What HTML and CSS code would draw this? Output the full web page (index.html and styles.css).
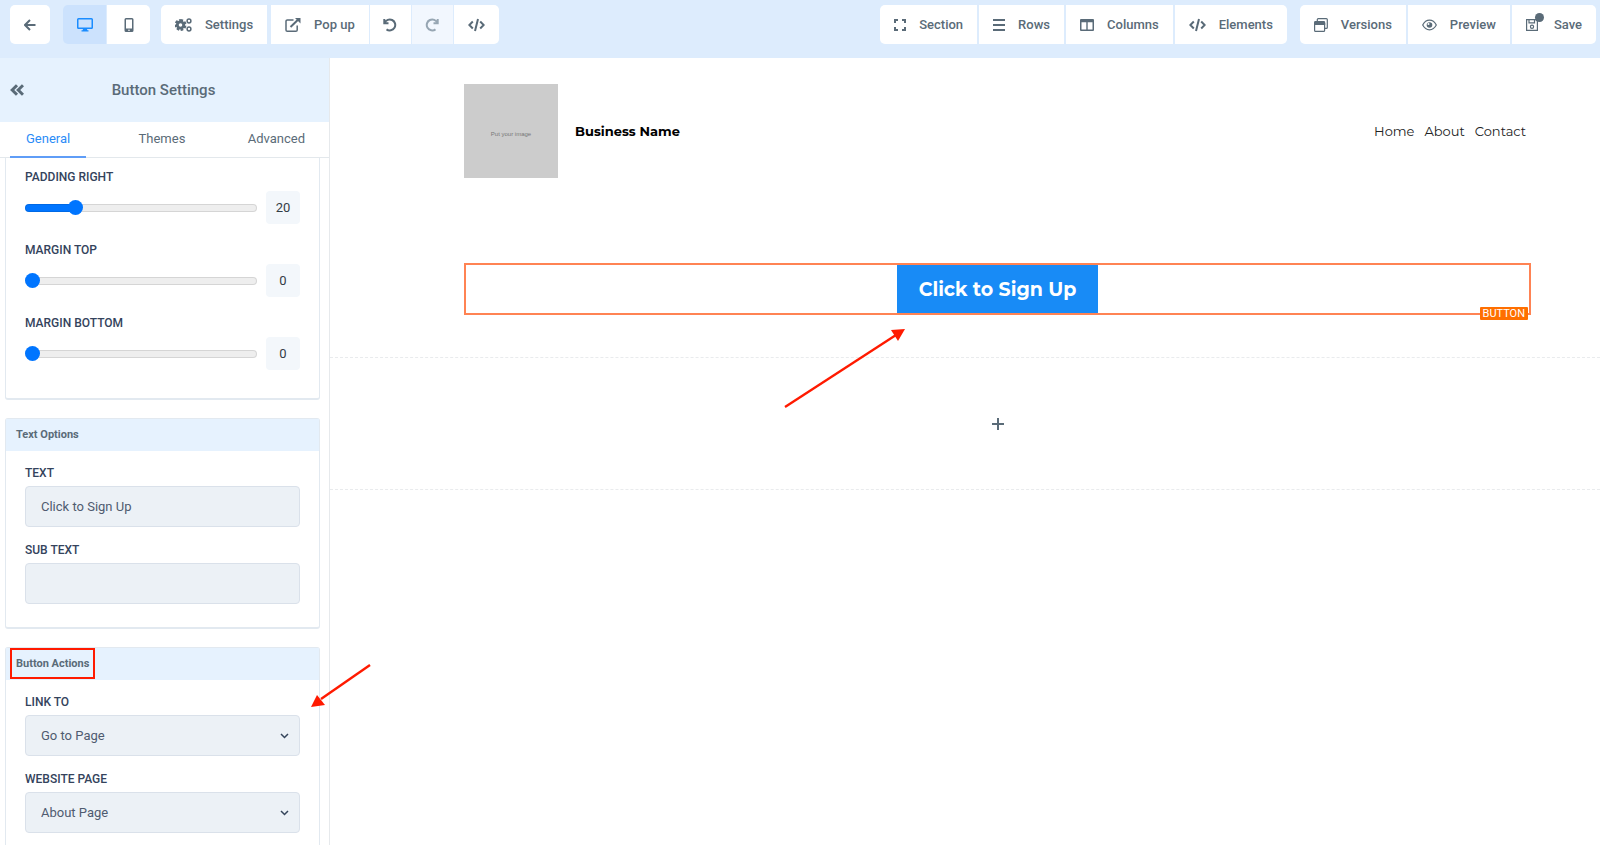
FILE: index.html
```html
<!DOCTYPE html>
<html lang="en">
<head>
  <meta charset="UTF-8">
  <meta name="viewport" content="width=device-width, initial-scale=1.0">
  <title>Page Builder</title>
  <link rel="stylesheet" href="styles.css">
</head>
<body>
  <header class="toolbar">
    <div class="group">
      <button class="tool back" aria-label="Back">
        <svg width="12" height="12" viewBox="0 0 12 12" class="line"><path d="M11.5 6H1.5M6 1L1 6l5 5"/></svg>
      </button>
    </div>
    <div class="group">
      <button class="tool device active" aria-label="Desktop">
        <svg width="16" height="14" viewBox="0 0 16 14"><path fill-rule="evenodd" d="M1.5 0h13A1.5 1.5 0 0 1 16 1.500v8a1.500 1.500 0 0 1-1.500 1.500H10l.4 1.300h1.100V13.500h-7V12.300h1.100L6 11H1.500A1.500 1.500 0 0 1 0 9.500v-8A1.500 1.500 0 0 1 1.500 0zm0 1.500v8h13v-8z"/></svg>
      </button>
      <button class="tool device" aria-label="Mobile">
        <svg width="10" height="14" viewBox="0 0 10 14"><path fill-rule="evenodd" d="M2 0h6a1.500 1.500 0 0 1 1.500 1.500v11A1.500 1.500 0 0 1 8 14H2a1.500 1.500 0 0 1-1.500-1.500v-11A1.500 1.500 0 0 1 2 0zm0 1.400v9h6v-9zm3 10a.8.8 0 1 0 0 1.600.8.800 0 0 0 0-1.600z"/></svg>
      </button>
    </div>
    <div class="group edit">
      <button class="tool settings">
        <svg width="17" height="14" viewBox="0 0 17 14">
          <circle cx="5.500" cy="7" r="3.200" fill="none" stroke="currentColor" stroke-width="2.800"/>
          <path fill="none" stroke="currentColor" stroke-width="2.400" stroke-dasharray="2.500 1.500" d="M5.500 2.200a4.800 4.800 0 1 1 0 9.600 4.800 4.800 0 0 1 0-9.600"/>
          <circle cx="14" cy="3" r="1.900" fill="none" stroke="currentColor" stroke-width="1.500"/>
          <circle cx="14" cy="11" r="1.900" fill="none" stroke="currentColor" stroke-width="1.500"/>
        </svg>
        Settings
      </button>
      <button class="tool">
        <svg width="16" height="14" viewBox="0 0 16 14"><path d="M8.500 2H2.300A1.300 1.300 0 0 0 1 3.300v8.600a1.300 1.300 0 0 0 1.300 1.300h8.600a1.300 1.300 0 0 0 1.300-1.300V7.500" fill="none" stroke="currentColor" stroke-width="1.500"/><path d="M5.500 9L13 1.800" stroke="currentColor" stroke-width="2"/><path d="M10 0h5.500v5.500z"/></svg>
        Pop up
      </button>
      <button class="tool small" aria-label="Undo">
        <svg width="14" height="14" viewBox="0 0 14 14" class="line"><path d="M1.300 1v4.200h4.200M1.600 5A5.500 5.500 0 1 1 3.500 11.400"/></svg>
      </button>
      <button class="tool small disabled" aria-label="Redo">
        <svg width="14" height="14" viewBox="0 0 14 14" class="line"><path d="M12.700 1v4.200H8.500M12.400 5A5.500 5.500 0 1 0 10.500 11.400"/></svg>
      </button>
      <button class="tool code" aria-label="Code">
        <svg width="17" height="14" viewBox="0 0 17 14" class="line"><path d="M4.800 3.500L1.300 7l3.500 3.500M12.200 3.500L15.700 7l-3.500 3.500M10 1L7 13"/></svg>
      </button>
    </div>
    <div class="group insert">
      <button class="tool">
        <svg width="12" height="12" viewBox="0 0 12 12" class="line"><path d="M1 4V1h3M8 1h3v3M11 8v3H8M4 11H1V8"/></svg>
        Section
      </button>
      <button class="tool">
        <svg width="12" height="12" viewBox="0 0 12 12" class="line"><path d="M0 1h12M0 6h12M0 11h12"/></svg>
        Rows
      </button>
      <button class="tool">
        <svg width="14" height="12" viewBox="0 0 14 12"><path fill-rule="evenodd" d="M1 0h12a1 1 0 0 1 1 1v10a1 1 0 0 1-1 1H1a1 1 0 0 1-1-1V1a1 1 0 0 1 1-1zm.5 3.200v7.400h4.800V3.200zm6.200 0v7.400h4.800V3.200z"/></svg>
        Columns
      </button>
      <button class="tool">
        <svg width="17" height="14" viewBox="0 0 17 14" class="line"><path d="M4.800 3.500L1.300 7l3.500 3.500M12.200 3.500L15.700 7l-3.500 3.500M10 1L7 13"/></svg>
        Elements
      </button>
    </div>
    <div class="group publish">
      <button class="tool">
        <svg width="14" height="14" viewBox="0 0 14 14"><path fill="none" stroke="currentColor" stroke-width="1.200" d="M3.300 3V1.600a1 1 0 0 1 1-1h8a1 1 0 0 1 1 1v7.800a1 1 0 0 1-1 1H11M.6 5v7.400a1 1 0 0 0 1 1h8a1 1 0 0 0 1-1V5"/><path d="M1.400 3h8.400A1.400 1.400 0 0 1 11.200 4.400V7H0V4.400A1.400 1.400 0 0 1 1.400 3z"/></svg>
        Versions
      </button>
      <button class="tool">
        <svg width="15" height="12" viewBox="0 0 15 12"><path fill="none" stroke="currentColor" stroke-width="1.200" d="M.7 6C2.200 3.100 4.600 1.200 7.500 1.200S12.800 3.100 14.300 6C12.800 8.900 10.400 10.800 7.500 10.800S2.200 8.900.7 6z"/><circle cx="7.500" cy="6" r="2.800"/><circle cx="6.500" cy="5" r="1" fill="#fff"/></svg>
        Preview
      </button>
      <button class="tool save">
        <svg width="15" height="12" viewBox="0 0 15 12"><path fill="none" stroke="currentColor" stroke-width="1.200" d="M.6.600h9l1.800 1.600v9.200H.6zM3 .9v3h5.500v-3"/><circle cx="6" cy="7.700" r="1.600" fill="none" stroke="currentColor" stroke-width="1.200"/></svg>
        Save
        <span class="unsaved"></span>
      </button>
    </div>
  </header>

  <div class="workspace">
    <aside class="sidebar">
      <div class="sidebar-head">
        <button class="collapse" aria-label="Collapse">
          <svg width="14" height="12" viewBox="0 0 14 12" class="line"><path d="M7 1.200L2.200 6 7 10.800M13 1.200L8.200 6l4.800 4.800"/></svg>
        </button>
        <h1>Button Settings</h1>
      </div>
      <nav class="tabs">
        <button class="tab selected">General</button>
        <button class="tab">Themes</button>
        <button class="tab">Advanced</button>
      </nav>

      <div class="panels">
        <section class="panel spacing">
          <div class="slider-field">
            <label for="padding-right">PADDING RIGHT</label>
            <div class="slider-row">
              <input type="range" id="padding-right" min="0" max="100" value="20" style="--fill: 20%">
              <output for="padding-right">20</output>
            </div>
          </div>
          <div class="slider-field">
            <label for="margin-top">MARGIN TOP</label>
            <div class="slider-row">
              <input type="range" id="margin-top" min="0" max="100" value="0" style="--fill: 0%">
              <output for="margin-top">0</output>
            </div>
          </div>
          <div class="slider-field">
            <label for="margin-bottom">MARGIN BOTTOM</label>
            <div class="slider-row">
              <input type="range" id="margin-bottom" min="0" max="100" value="0" style="--fill: 0%">
              <output for="margin-bottom">0</output>
            </div>
          </div>
        </section>

        <section class="panel">
          <h2>Text Options</h2>
          <div class="fields">
            <label for="text">TEXT</label>
            <input type="text" class="control" id="text" value="Click to Sign Up">
            <label for="sub-text">SUB TEXT</label>
            <input type="text" class="control" id="sub-text">
          </div>
        </section>

        <section class="panel">
          <h2><span class="marked">Button Actions</span></h2>
          <div class="fields">
            <label for="link-to">LINK TO</label>
            <div class="select-wrap">
              <select class="control" id="link-to"><option>Go to Page</option></select>
              <svg width="9" height="6" viewBox="0 0 9 6" class="line"><path d="M1 1l3.500 3.500L8 1"/></svg>
            </div>
            <label for="website-page">WEBSITE PAGE</label>
            <div class="select-wrap">
              <select class="control" id="website-page"><option>About Page</option></select>
              <svg width="9" height="6" viewBox="0 0 9 6" class="line"><path d="M1 1l3.500 3.500L8 1"/></svg>
            </div>
          </div>
        </section>
      </div>
      <svg class="arrow arrow-panel" width="60" height="46" viewBox="0 0 60 46"><path d="M59 1L10 35" stroke="#ff1a00" stroke-width="2.400"/><path d="M0 43l6-12 8 10z" fill="#ff1a00"/></svg>
    </aside>

    <main class="canvas">
      <section class="page-section">
        <div class="site-head">
          <div class="logo">Put your image</div>
          <strong>Business Name</strong>
          <nav class="site-nav">
            <a href="#">Home</a>
            <a href="#">About</a>
            <a href="#">Contact</a>
          </nav>
        </div>
        <div class="element">
          <button class="signup">Click to Sign Up</button>
          <span class="tag">BUTTON</span>
          <svg class="arrow arrow-button" width="122" height="80" viewBox="0 0 122 80"><path d="M1 79L112 7" stroke="#ff1a00" stroke-width="2.400"/><path d="M121 1l-14 1 7 11z" fill="#ff1a00"/></svg>
        </div>
      </section>
      <section class="page-section empty">
        <button class="add" aria-label="Add row">
          <svg width="12" height="12" viewBox="0 0 12 12" class="line"><path d="M6 0v12M0 6h12"/></svg>
        </button>
      </section>
    </main>
  </div>
</body>
</html>
```

FILE: styles.css
```css
* {
  box-sizing: border-box;
}

body {
  margin: 0;
  height: 100vh;
  display: flex;
  flex-direction: column;
  overflow: hidden;
  font-family: Roboto, sans-serif;
  font-size: 13px;
  color: #5a6b78;
  background: #fff;
}

button {
  font: inherit;
  color: inherit;
  border: none;
  background: none;
  padding: 0;
  cursor: pointer;
}

svg {
  fill: currentColor;
  flex-shrink: 0;
}

svg.line {
  fill: none;
  stroke: currentColor;
  stroke-width: 2;
}

/* top toolbar */
.toolbar {
  height: 58px;
  flex-shrink: 0;
  display: flex;
  align-items: flex-start;
  gap: 13px;
  padding: 5px 4px 0 10px;
  background: #ddecfd;
}

.group {
  display: flex;
  gap: 1px;
  border-radius: 5px;
  overflow: hidden;
}

.edit {
  margin-left: -2px;
}

.settings {
  margin-right: 3px;
}

.insert {
  gap: 2px;
  margin-left: auto;
}

.publish {
  gap: 2px;
}

.tool {
  position: relative;
  height: 39px;
  display: flex;
  align-items: center;
  justify-content: center;
  gap: 13px;
  padding: 0 14px;
  font-size: 13px;
  font-weight: 500;
  background: #fff;
  white-space: nowrap;
}

.back {
  width: 40px;
}

.device {
  width: 43px;
}

.small {
  width: 41px;
}

.code {
  width: 45px;
}

.tool.active {
  color: #1a8cff;
  background: #cce2fd;
}

.tool.disabled {
  color: #97a6b3;
  background: #f2f7fe;
}

.unsaved {
  position: absolute;
  top: 8px;
  left: 23px;
  width: 9px;
  height: 9px;
  border-radius: 50%;
  background: #5a6b78;
}

.workspace {
  flex: 1;
  display: flex;
  min-height: 0;
}

/* settings sidebar */
.sidebar {
  position: relative;
  width: 330px;
  flex-shrink: 0;
  display: flex;
  flex-direction: column;
  border-right: 1px solid #e6e9ec;
}

.sidebar-head {
  height: 64px;
  flex-shrink: 0;
  display: flex;
  align-items: center;
  padding: 0 10px;
  background: #e6f2fe;
}

.sidebar-head h1 {
  flex: 1;
  margin: 0 16px 0 0;
  text-align: center;
  font-size: 15px;
  font-weight: 500;
}

.collapse {
  display: flex;
}

.collapse svg {
  stroke-width: 3;
}

.tabs {
  height: 36px;
  flex-shrink: 0;
  display: flex;
  justify-content: space-between;
  padding: 0 14px 0 10px;
  border-bottom: 1px solid #e3e8ec;
}

.tab {
  height: 36px;
  padding: 0 16px 2px;
  border-bottom: 2px solid transparent;
}

.tab:last-child {
  padding-right: 10px;
  padding-left: 10px;
}

.tab.selected {
  color: #2a8cf7;
  border-color: #5f9df7;
}

.panels {
  flex: 1;
  min-height: 0;
  overflow: hidden;
  padding: 0 9px 0 5px;
}

.panel {
  margin-bottom: 18px;
  border: 1px solid #e2e9f0;
  border-bottom-width: 2px;
  border-radius: 3px;
}

.panel h2 {
  margin: 0;
  padding: 0 10px;
  font-size: 11px;
  line-height: 32px;
  font-weight: 700;
  background: #e6f2fe;
}

.panel label {
  display: block;
  font-size: 12px;
  line-height: 16px;
  font-weight: 500;
  color: #34435c;
}

.spacing {
  padding: 11px 19px 28px;
  border-top: none;
  border-radius: 0 0 3px 3px;
}

.slider-field + .slider-field {
  margin-top: 18px;
}

.slider-row {
  display: flex;
  align-items: center;
  gap: 9px;
  margin-top: 6px;
}

.slider-row input {
  flex: 1;
  min-width: 0;
  height: 8px;
  margin: 0;
  appearance: none;
  border-radius: 4px;
  background: linear-gradient(to right, #0075ff var(--fill), #eee var(--fill));
  box-shadow: inset 0 0 0 1px rgba(0, 0, 0, 0.1);
}

.slider-row input::-webkit-slider-thumb {
  appearance: none;
  width: 15px;
  height: 15px;
  border-radius: 50%;
  background: #0075ff;
}

.slider-row output {
  width: 34px;
  line-height: 33px;
  border-radius: 4px;
  text-align: center;
  color: #333c45;
  background: #f3f7fb;
}

.fields {
  padding: 14px 19px 23px;
}

.control {
  display: block;
  width: 100%;
  height: 41px;
  margin: 5px 0 15px;
  padding: 0 15px;
  font: inherit;
  color: #4f5b70;
  background: #ecf1f6;
  border: 1px solid #dae1ea;
  border-radius: 4px;
  appearance: none;
}

.fields > .control:last-child {
  margin-bottom: 0;
}

.select-wrap {
  position: relative;
}

.select-wrap svg {
  position: absolute;
  right: 11px;
  top: 18px;
  color: #34445a;
  stroke-width: 1.5;
}

/* callouts */
.marked {
  position: relative;
}

.marked::after {
  content: "";
  position: absolute;
  inset: -9px -6px;
  border: 2px solid #ff1a00;
}

.arrow {
  position: absolute;
  z-index: 2;
}

.arrow-panel {
  left: 311px;
  top: 606px;
}

.arrow-button {
  right: 623px;
  top: 63px;
}

/* page canvas */
.canvas {
  flex: 1;
  min-width: 0;
  font-family: Montserrat, Inter, sans-serif;
  color: #000;
}

.page-section {
  padding: 26px 69px 42px 134px;
  border-bottom: 1px dashed #e9ebed;
}

.site-head {
  display: flex;
  align-items: center;
  font-size: 13px;
}

.logo {
  width: 94px;
  height: 94px;
  margin-right: 17px;
  padding-top: 5px;
  display: flex;
  align-items: center;
  justify-content: center;
  font-family: "Liberation Sans", sans-serif;
  font-size: 6px;
  color: #777;
  background: #ccc;
}

.site-nav {
  display: flex;
  gap: 10px;
  margin-left: auto;
  padding-right: 5px;
}

.site-nav a {
  color: #222;
  text-decoration: none;
}

.element {
  position: relative;
  margin-top: 85px;
  display: flex;
  justify-content: center;
  border: 2px solid #ff8353;
}

.signup {
  height: 48px;
  padding: 0 22px;
  font-size: 19px;
  font-weight: 700;
  color: #fff;
  background: #188bf6;
}

.tag {
  position: absolute;
  right: 1px;
  bottom: -7px;
  padding: 0 3px;
  border-radius: 1px;
  font-family: Roboto, sans-serif;
  font-size: 11px;
  line-height: 13px;
  color: #fff;
  background: #ff6f00;
}

.empty {
  height: 132px;
  padding-top: 0;
  padding-bottom: 0;
  display: flex;
  align-items: center;
  justify-content: center;
}

.add {
  display: flex;
  color: #5a6b78;
}
```
